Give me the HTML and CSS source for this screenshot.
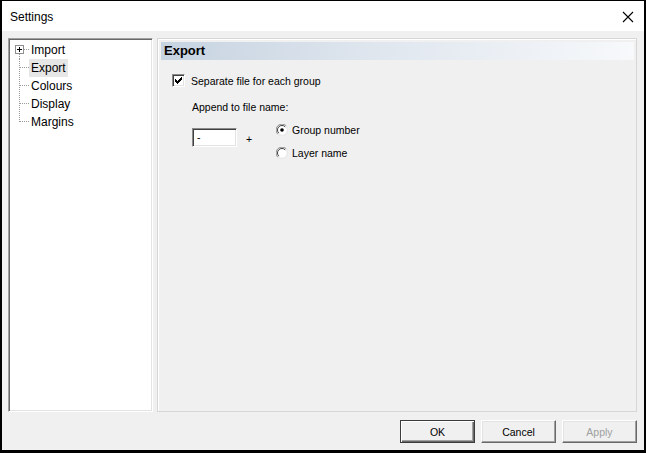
FILE: index.html
```html
<!DOCTYPE html>
<html>
<head>
<meta charset="utf-8">
<link rel="stylesheet" href="styles.css">
</head>
<body>
<div class="window">
  <div class="titlebar">
    <span class="title">Settings</span>
    <svg class="close" width="12" height="12" viewBox="0 0 12 12"><path d="M1 1 L11 11 M11 1 L1 11" stroke="#000" stroke-width="1.1" fill="none"/></svg>
  </div>
  <div class="content">
    <div class="main">
      <div class="tree">
        <div class="node">
          <svg class="twig" width="19" height="18" viewBox="0 0 19 18" shape-rendering="crispEdges">
            <rect x="5.5" y="4.5" width="8" height="8" fill="#fff" stroke="#8e8e8e"/>
            <path d="M7 8.5 H12 M9.5 6 V11" stroke="#000"/>
            <path d="M14 8.5 H19 M9.5 13 V18" stroke="#9a9a9a" stroke-dasharray="1 1"/>
          </svg>
          <span class="label">Import</span>
        </div>
        <div class="node">
          <svg class="twig" width="19" height="18" viewBox="0 0 19 18" shape-rendering="crispEdges">
            <path d="M9.5 0 V18 M10 8.5 H19" stroke="#9a9a9a" stroke-dasharray="1 1"/>
          </svg>
          <span class="label selected">Export</span>
        </div>
        <div class="node">
          <svg class="twig" width="19" height="18" viewBox="0 0 19 18" shape-rendering="crispEdges">
            <path d="M9.5 0 V18 M10 8.5 H19" stroke="#9a9a9a" stroke-dasharray="1 1"/>
          </svg>
          <span class="label">Colours</span>
        </div>
        <div class="node">
          <svg class="twig" width="19" height="18" viewBox="0 0 19 18" shape-rendering="crispEdges">
            <path d="M9.5 0 V18 M10 8.5 H19" stroke="#9a9a9a" stroke-dasharray="1 1"/>
          </svg>
          <span class="label">Display</span>
        </div>
        <div class="node">
          <svg class="twig" width="19" height="18" viewBox="0 0 19 18" shape-rendering="crispEdges">
            <path d="M9.5 0 V9 M10 8.5 H19" stroke="#9a9a9a" stroke-dasharray="1 1"/>
          </svg>
          <span class="label">Margins</span>
        </div>
      </div>
      <div class="panel">
        <div class="panel-header">Export</div>
        <div class="options">
          <div class="check-row">
            <span class="checkbox">
              <svg width="9" height="9" viewBox="0 0 9 9" shape-rendering="crispEdges"><path d="M1 3h1v3h-1z M2 4h1v3h-1z M3 5h1v3h-1z M4 4h1v3h-1z M5 3h1v3h-1z M6 2h1v3h-1z M7 1h1v3h-1z" fill="#000"/></svg>
            </span>
            <span class="text">Separate file for each group</span>
          </div>
          <div class="append-label">Append to file name:</div>
          <div class="append-row">
            <div class="textbox">-</div>
            <span class="plus">+</span>
            <div class="radios">
              <div class="radio-row">
                <svg class="radio" width="12" height="12" viewBox="0 0 12 12">
                  <path d="M10.2 1.8 A5.5 5.5 0 0 0 1.8 10.2" stroke="#8a8a8a" fill="none"/>
                  <path d="M1.8 10.2 A5.5 5.5 0 0 0 10.2 1.8" stroke="#e8e8e8" fill="none"/>
                  <circle cx="6" cy="6" r="4.5" fill="#fff"/>
                  <path d="M9.2 2.8 A4.5 4.5 0 0 0 2.8 9.2" stroke="#404040" fill="none"/>
                  <circle cx="6" cy="6" r="1.8" fill="#000"/>
                </svg>
                <span class="text">Group number</span>
              </div>
              <div class="radio-row">
                <svg class="radio" width="12" height="12" viewBox="0 0 12 12">
                  <path d="M10.2 1.8 A5.5 5.5 0 0 0 1.8 10.2" stroke="#8a8a8a" fill="none"/>
                  <path d="M1.8 10.2 A5.5 5.5 0 0 0 10.2 1.8" stroke="#e8e8e8" fill="none"/>
                  <circle cx="6" cy="6" r="4.5" fill="#fff"/>
                  <path d="M9.2 2.8 A4.5 4.5 0 0 0 2.8 9.2" stroke="#404040" fill="none"/>
                </svg>
                <span class="text">Layer name</span>
              </div>
            </div>
          </div>
        </div>
      </div>
    </div>
    <div class="buttons">
      <button class="btn default">OK</button>
      <button class="btn">Cancel</button>
      <button class="btn disabled">Apply</button>
    </div>
  </div>
</div>
</body>
</html>
```

FILE: styles.css
```css
* { box-sizing: border-box; }
html, body { margin: 0; padding: 0; }
body {
  width: 646px;
  height: 453px;
  font-family: "Liberation Sans", Arial, sans-serif;
  color: #000;
  background: #000;
}
.window {
  width: 646px;
  height: 453px;
  border-style: solid;
  border-color: #000;
  border-width: 1px 2px 3px 2px;
  display: flex;
  flex-direction: column;
}
.titlebar {
  height: 30px;
  flex: none;
  background: #fff;
  display: flex;
  align-items: center;
  padding: 0 0 0 8px;
}
.title {
  font-size: 12px;
  flex: 1;
  margin-top: 2px;
}
.close {
  margin-right: 10px;
  margin-top: 2px;
}
.content {
  flex: 1;
  background: #f0f0f0;
  padding: 7px 7px 7px 6px;
  display: flex;
  flex-direction: column;
}
.main {
  height: 374px;
  display: flex;
  gap: 4px;
}
.tree {
  width: 145px;
  background: #fff;
  border: 1px solid;
  border-color: #a0a0a0 #ffffff #ffffff #a0a0a0;
  box-shadow: inset 1px 1px 0 #696969, inset -1px -1px 0 #e3e3e3;
  padding: 2px 0 0 1px;
  font-size: 12px;
}
.node {
  height: 18px;
  display: flex;
  align-items: center;
}
.twig { flex: none; display: block; }
.label {
  height: 18px;
  line-height: 18px;
  padding: 0 2px;
}
.label.selected { background: #e6e6e6; }
.panel {
  width: 480px;
  border: 1px solid #d6d6d6;
  box-shadow: inset 1px 1px 0 #fff;
  padding: 3px 2px 3px 3px;
  display: flex;
  flex-direction: column;
}
.panel-header {
  height: 18px;
  line-height: 18px;
  padding-left: 3px;
  font-size: 13px;
  font-weight: bold;
  background: linear-gradient(to right, #c6d3e1 0%, #dfe6ee 45%, #f7f9fb 100%);
}
.options {
  padding: 14px 0 0 11px;
  font-size: 10.5px;
}
.check-row {
  display: flex;
  align-items: center;
  gap: 6px;
  height: 13px;
}
.checkbox {
  width: 13px;
  height: 13px;
  background: #fff;
  border: 1px solid;
  border-color: #8a8a8a #ffffff #ffffff #8a8a8a;
  box-shadow: inset 1px 1px 0 #404040, inset -1px -1px 0 #e3e3e3;
  display: flex;
  align-items: center;
  justify-content: center;
}
.checkbox svg { display: block; }
.append-label {
  margin: 14px 0 0 20px;
  line-height: 13px;
}
.append-row {
  display: flex;
  align-items: flex-start;
  margin-top: 9px;
}
.textbox {
  width: 45px;
  height: 19px;
  margin: 5px 0 0 20px;
  background: #fff;
  border: 1px solid;
  border-color: #8a8a8a #ffffff #ffffff #8a8a8a;
  box-shadow: inset 1px 1px 0 #404040, inset -1px -1px 0 #e3e3e3;
  padding: 2px 0 0 4px;
  line-height: 13px;
}
.plus {
  width: 6px;
  margin: 10px 0 0 9px;
  line-height: 13px;
}
.radios {
  margin-left: 24px;
  display: flex;
  flex-direction: column;
  gap: 10px;
}
.radio-row {
  display: flex;
  align-items: center;
  gap: 4px;
  height: 13px;
}
.radio { display: block; flex: none; }
.buttons {
  display: flex;
  justify-content: flex-end;
  gap: 6px;
  margin-top: 8px;
}
.btn {
  width: 75px;
  height: 23px;
  margin: 0;
  padding: 0;
  font-family: "Liberation Sans", Arial, sans-serif;
  font-size: 10.5px;
  color: #000;
  background: #f0f0f0;
  border: 1px solid;
  border-color: #ffffff #696969 #696969 #ffffff;
  box-shadow: inset -1px -1px 0 #a0a0a0, inset 1px 1px 0 #e3e3e3;
}
.btn.default {
  border-color: #3c3c3c;
  box-shadow: inset 1px 1px 0 #ffffff, inset -1px -1px 0 #696969, inset -2px -2px 0 #a0a0a0;
}
.btn.disabled { color: #a0a0a0; }
```
